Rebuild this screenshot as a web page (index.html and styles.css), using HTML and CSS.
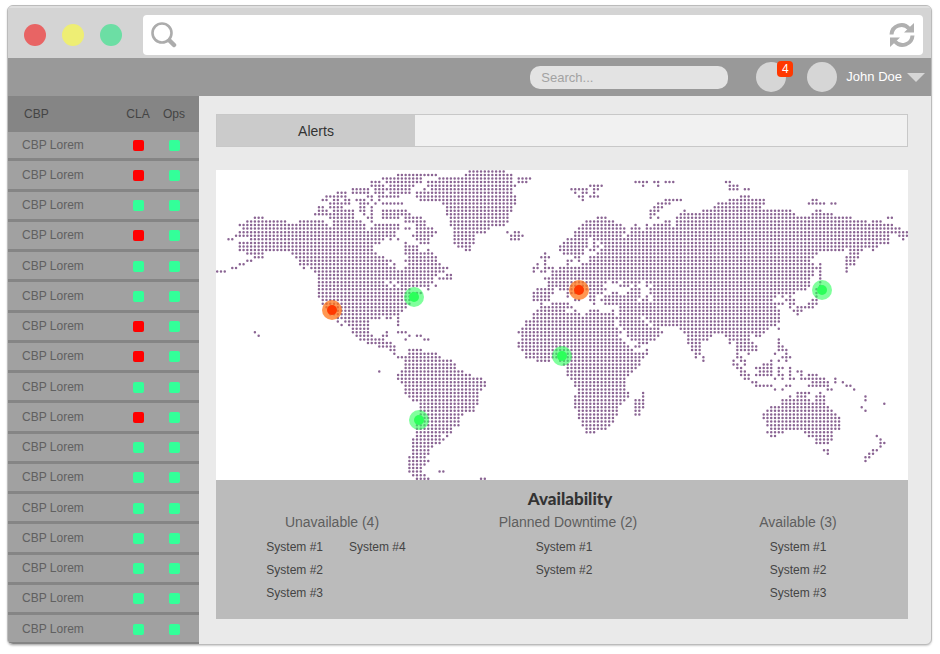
FILE: index.html
```
<!DOCTYPE html>
<html lang="en">
<head>
<meta charset="utf-8">
<title>System alerts</title>
<link rel="stylesheet" href="styles.css">
</head>
<body>
<div class="window">
  <header class="chrome">
    <span class="light light-red"></span>
    <span class="light light-yellow"></span>
    <span class="light light-green"></span>
    <div class="address">
      <svg class="address-icon" viewBox="0 0 26 26" aria-hidden="true"><circle cx="11" cy="11" r="9.500" fill="none" stroke="#acacac" stroke-width="2.600"/><path d="M18.500 18.500l4.500 4.500" stroke="#acacac" stroke-width="4.500" stroke-linecap="round"/></svg>
      <input class="address-input" type="text" aria-label="Address">
      <button class="reload" type="button" aria-label="Reload">
        <svg class="address-icon" viewBox="0 0 26 26" aria-hidden="true"><g fill="none" stroke="#b0b0b0" stroke-width="4"><path d="M2.500 12.500A10 10 0 0 1 20 6.500"/><path d="M23.500 13.500A10 10 0 0 1 6 19.500"/></g><path d="M25 1v9.500h-10zM1 25v-9.500h10z" fill="#b0b0b0"/></svg>
      </button>
    </div>
  </header>
  <nav class="topbar">
    <input class="search" type="text" placeholder="Search..." aria-label="Search">
    <button class="round notifications" type="button" aria-label="Notifications"><span class="badge">4</span></button>
    <button class="user" type="button"><span class="round"></span><span class="user-name">John Doe</span><span class="caret"></span></button>
  </nav>
  <div class="body">
    <aside class="sidebar">
      <table class="status">
        <thead><tr><th class="name">CBP</th><th>CLA</th><th>Ops</th></tr></thead>
        <tbody>
          <tr><td class="name">CBP Lorem</td><td><i class="led down"></i></td><td><i class="led"></i></td></tr>
          <tr><td class="name">CBP Lorem</td><td><i class="led down"></i></td><td><i class="led"></i></td></tr>
          <tr><td class="name">CBP Lorem</td><td><i class="led"></i></td><td><i class="led"></i></td></tr>
          <tr><td class="name">CBP Lorem</td><td><i class="led down"></i></td><td><i class="led"></i></td></tr>
          <tr><td class="name">CBP Lorem</td><td><i class="led"></i></td><td><i class="led"></i></td></tr>
          <tr><td class="name">CBP Lorem</td><td><i class="led"></i></td><td><i class="led"></i></td></tr>
          <tr><td class="name">CBP Lorem</td><td><i class="led down"></i></td><td><i class="led"></i></td></tr>
          <tr><td class="name">CBP Lorem</td><td><i class="led down"></i></td><td><i class="led"></i></td></tr>
          <tr><td class="name">CBP Lorem</td><td><i class="led"></i></td><td><i class="led"></i></td></tr>
          <tr><td class="name">CBP Lorem</td><td><i class="led down"></i></td><td><i class="led"></i></td></tr>
          <tr><td class="name">CBP Lorem</td><td><i class="led"></i></td><td><i class="led"></i></td></tr>
          <tr><td class="name">CBP Lorem</td><td><i class="led"></i></td><td><i class="led"></i></td></tr>
          <tr><td class="name">CBP Lorem</td><td><i class="led"></i></td><td><i class="led"></i></td></tr>
          <tr><td class="name">CBP Lorem</td><td><i class="led"></i></td><td><i class="led"></i></td></tr>
          <tr><td class="name">CBP Lorem</td><td><i class="led"></i></td><td><i class="led"></i></td></tr>
          <tr><td class="name">CBP Lorem</td><td><i class="led"></i></td><td><i class="led"></i></td></tr>
          <tr><td class="name">CBP Lorem</td><td><i class="led"></i></td><td><i class="led"></i></td></tr>
        </tbody>
      </table>
    </aside>
    <main class="content">
      <div class="tabs"><button class="tab" type="button">Alerts</button></div>
      <svg class="map" viewBox="0 0 692 310" role="img" aria-label="World map of system alerts">
        <path id="land" class="land"/>
        <g class="pin alert"><circle cx="116" cy="140" r="10"/><circle cx="116" cy="140" r="5"/></g>
        <g class="pin alert"><circle cx="363" cy="120" r="10"/><circle cx="363" cy="120" r="5"/></g>
        <g class="pin"><circle cx="198" cy="127" r="10"/><circle cx="198" cy="127" r="5"/></g>
        <g class="pin"><circle cx="346" cy="186" r="10"/><circle cx="346" cy="186" r="5"/></g>
        <g class="pin"><circle cx="203" cy="250" r="10"/><circle cx="203" cy="250" r="5"/></g>
        <g class="pin"><circle cx="606" cy="120" r="10"/><circle cx="606" cy="120" r="5"/></g>
      </svg>
      <section class="availability">
        <h2 class="availability-title">Availability</h2>
        <div class="groups">
          <div class="group">
            <h3 class="group-title">Unavailable (4)</h3>
            <ul class="systems two-columns"><li>System #1</li><li>System #2</li><li>System #3</li><li>System #4</li></ul>
          </div>
          <div class="group planned">
            <h3 class="group-title">Planned Downtime (2)</h3>
            <ul class="systems"><li>System #1</li><li>System #2</li></ul>
          </div>
          <div class="group">
            <h3 class="group-title">Available (3)</h3>
            <ul class="systems"><li>System #1</li><li>System #2</li><li>System #3</li></ul>
          </div>
        </div>
      </section>
    </main>
  </div>
</div>
<script src="map.js"></script>
</body>
</html>
```
FILE: styles.css
```
* { box-sizing: border-box; }

body {
  margin: 0;
  padding: 5px 8px 9px 7px;
  background: #fff;
  font-family: "Liberation Sans", Arial, sans-serif;
  font-size: 12px;
  line-height: 16px;
  color: #444;
}

button, input { font: inherit; color: inherit; border: 0; padding: 0; background: none; }

.window {
  display: flex;
  flex-direction: column;
  min-height: calc(100vh - 14px);
  border: 1px solid #bbb;
  border-radius: 6px;
  overflow: hidden;
  background: #eaeaea;
  box-shadow: 0 1px 2px #ccc;
}

.chrome {
  display: flex;
  align-items: center;
  gap: 16px;
  height: 52px;
  padding: 4px 8px 0 16px;
  border-top: 2px solid #dfdfdf;
  background: #d4d4d4;
}
.light { width: 22px; height: 22px; border-radius: 50%; }
.light-red { background: #e86464; }
.light-yellow { background: #eeee74; }
.light-green { background: #6cdea4; }
.address {
  flex: 1;
  display: flex;
  align-items: center;
  height: 40px;
  margin-left: 5px;
  padding: 0 8px;
  border-radius: 4px;
  background: #fff;
}
.address-input { flex: 1; min-width: 0; height: 32px; }
.address-icon { display: block; width: 26px; height: 26px; }

.topbar {
  display: flex;
  align-items: center;
  justify-content: flex-end;
  height: 38px;
  padding-right: 6px;
  background: #999;
}
.search {
  width: 198px;
  height: 23px;
  margin-right: 28px;
  padding: 0 11px;
  border-radius: 10px;
  background: #e3e3e3;
  font-size: 13px;
}
.search::placeholder { color: #a2a2a2; opacity: 1; }
.round { width: 30px; height: 30px; border-radius: 50%; background: #d6d6d6; }
.notifications { position: relative; margin-right: 21px; }
.badge {
  position: absolute;
  top: -1px;
  right: -7px;
  width: 16px;
  height: 16px;
  border-radius: 4px;
  background: #ff3800;
  color: #fff;
}
.user { display: flex; align-items: center; font-size: 13px; color: #fff; }
.user-name { margin: 0 5px 0 9px; }
.caret { border: 9px solid transparent; border-top-color: #d6d6d6; border-bottom-width: 0; }

.body { flex: 1; display: flex; }

.sidebar { display: flex; width: 191px; padding-bottom: 1px; background: #858585; }
.status { width: 100%; border-collapse: collapse; table-layout: fixed; }
.status th { width: 36px; height: 36px; padding: 0; font-weight: 400; }
.status th:last-child { width: 43px; padding-right: 7px; }
.status td:last-child { padding-right: 7px; }
.status th.name { width: auto; padding-left: 16px; text-align: left; }
.status tbody tr { border-bottom: 3px solid #858585; background: #a1a1a1; }
.status tbody tr:last-child { border-bottom-width: 1px; }
.status td { padding: 0; text-align: center; color: #606060; }
.status td.name { padding-left: 14px; text-align: left; }
.led { display: block; width: 11px; height: 11px; margin: 1px auto 0; border-radius: 2px; background: #33ff99; }
.led.down { background: #f00; }

.content { flex: 1; min-width: 0; padding: 18px 23px 24px 17px; }
.tabs { display: flex; height: 33px; margin-bottom: 23px; border: 1px solid #c8c8c8; background: #f1f1f1; }
.tab { width: 198px; background: #cbcbcb; font-size: 14px; color: #333; }

.map { display: block; width: 100%; background: #fff; }
.land { fill: none; stroke: #8a6493; stroke-width: 2.5px; stroke-linecap: round; }
.pin circle { fill: #2cff5a; }
.pin circle:first-child { opacity: .6; }
.pin.alert circle { fill: #ff3800; }
.pin.alert circle:first-child { fill: #ff7418; opacity: .75; }

.availability { padding: 8px 0 14px; background: #bbb; }
.availability-title {
  margin: 0 0 4px;
  padding-left: 16px;
  font: 900 17px/22px Lato, sans-serif;
  text-align: center;
  color: #333;
}
.groups { display: grid; grid-template-columns: 232px 1fr 220px; }
.group { display: flex; flex-direction: column; align-items: center; }
.group-title { margin: 0 0 6px; font-size: 14px; font-weight: 400; line-height: 16px; color: #5e5e5e; }
.systems { margin: 0; padding: 0; list-style: none; line-height: 23px; }
.planned .systems { padding-right: 8px; }
.two-columns { display: grid; grid-template-rows: repeat(3, auto); grid-auto-flow: column; column-gap: 26px; margin-left: 8px; }
```
FILE: map.js
```
// Each entry is one row of the dotted map: the column ranges that are land.
const rows = [
"67-76","48-58,66-78","44-54,59-78,80-83","41-43,45-54,56-78,80-82,111-114,116-117,119-121,135-136",
"41-44,46-52,56-79,99-102,113,117,136-138","36-40,42-51,55,57-78,94-98,100-101,136-138,140-141",
"32-34,36-40,42-44,46-51,53-78,95,97-98,100","29-34,40-41,43-48,53-79,96-97,99-101,139-141",
"28-29,31-32,34-35,37-39,41,43,54-79,97,119-123,136-145,158-159","30-35,38-40,42,44-49,60-79,117-120,133-145,157-161,163-164",
"27-28,30-33,38-39,41,61-78,116-118,132-144","27-29,31-36,38-39,41,44-50,61-78,115-117,124,129-152,159-160",
"26-29,30-36,39,41,44-51,61-77,115-116,123-153,158-163","10-12,30-36,40-41,44-48,50-54,62-77,101-103,115,117,122-168,178-179",
"8-18,22-28,31-38,41,50-55,62-77,98-105,119-120,122-172,174-176","6-29,31-39,42-48,53-55,62-76,97-107,111,114,116-120,122-179",
"7-39,41-48,50-51,53-57,63-72,96-108,110-112,114-181","6-47,53-58,63-71,77,79-80,95-108,110-183",
"5-47,52-57,63-68,78-81,95-107,109-178,181-183","3-4,9-44,46,48,53-56,63-68,78-80,93-98,100-178,182",
"6-43,50,54-56,63-68,92-98,100,102-178","6-41,50-53,64-67,91-98,100-101,103-175",
"6-41,50-53,56,66-67,91-97,99-100,102-166,168-171,174","8-12,20-42,50-57,87,92-97,101-159,168-170",
"10-12,21-44,51-58,86-88,95-96,99-158,167-170","8-9,22-46,50-58,87,93-94,96,99-157,167-169",
"6-7,22-45,47,51-59,85,87,93,97-158,160,167-169","4-5,23,25-47,50-61,84-85,87-89,91-158,159-160,167",
"0-2,26-60,84,86-87,89-158,160,167","27-58,61-62,89-158,160","27-57,59-62,87-157,160","27-44,46,48-57,88-103,105-106,108-112,114-157,160",
"27-45,47,49-56,58,88-102,107-109,111,114,116-157,160","27-51,56,85-89,91-103,110-112,115-156,159-160",
"27-54,84-89,93-96,99-102,105-106,109-112,115-153,159","27-53,84-88,93,99-100,103-112,114,116-148,150,152,159",
"28-51,84-88,95-96,99-100,102-111,113-114,116-147,151-153,158-159","28-51,86,89-93,100,103-147,148-150,152-153,157-159",
"29-50,86-94,107-148,152,154-158","30-49,85-92,95,99-101,105,107-149,153-155","30-48,84-96,98-105,107-149,154",
"32-43,45-46,48,84-112,114-149","32,34-40,48,82-105,107-113,115-149","33,35-40,48,82-105,107-114,116-148",
"36-40,81-106,108-117,123-146,149","10,36-40,45,48-50,80-107,109-118,124-145","11,37-41,44-45,51,53-54,81-106,109-117,125-131,135-141,143-144",
"38-44,50,55-56,81-107,110-116,125-130,136-141,149","40-46,80-108,112-114,125-128,136,138-142,149",
"43-47,80-109,111-112,126-128,138-143,149-150","46-47,51-54,81-110,114,126-128,138-139,140-143,149-151",
"47,51-58,82-112,113-114,127-128,138,141,148,151","48-49,50-59,82-113,127,129,138-139,150-152",
"50-62,85-88,91-112,129,137,139-140,147,149,151","50-63,92-112,137-138,140,145-147","50-63,93-111,138-139,143-147,149-150,152",
"43,49-65,93-110,139-140,144-147,149,152,154-155","48-67,93-109,139-141,143-147,149-150,152,155,157-159",
"48-70,94-108,140-141,148,150,152-153,155-161,164","49-71,95-108,142-143,158-162,164,166","50-71,95-108,143-147,151-152,157-162,167-168",
"50-70,96-108,148,150,162-163,169","50-69,96-109,113,154-157,160","51-69,95-109,113,152,154-156,159-161,172",
"52-69,95-108,111-113,150-157,159-161,172","54-69,95-107,111-113,150-161,177","54-68,95-106,111-113,147-162,171",
"54-68,96-106,111-112,146-163,172","54-65,96-106,111-112,145-164","53-64,96-105,145-165","53-64,97-105,146-165",
"53-64,97-104,146-165","53-62,98-103,147-165","53-62,98-100,146-150,156-163","53-59,61,147-148,157-163,175",
"52-60,159-163,176","52-59,159-162,176-177","52-57,176","52-56,161-162,174-175","52-56,162,173-174",
"51-55,172-173","51-56,172","51-55","51-54","51-54,59-60","52-55","53-56,70-71"
];

const stepX = 3.769;
const stepY = 3.574;
let d = "";
rows.forEach((row, r) => {
  for (const range of row.split(",")) {
    const [from, to = from] = range.split("-").map(Number);
    for (let c = from; c <= to; c++) {
      d += `M${(1.2 + c * stepX).toFixed(2)} ${(1.4 + r * stepY).toFixed(2)}h.01`;
    }
  }
});
document.getElementById("land").setAttribute("d", d);
```
